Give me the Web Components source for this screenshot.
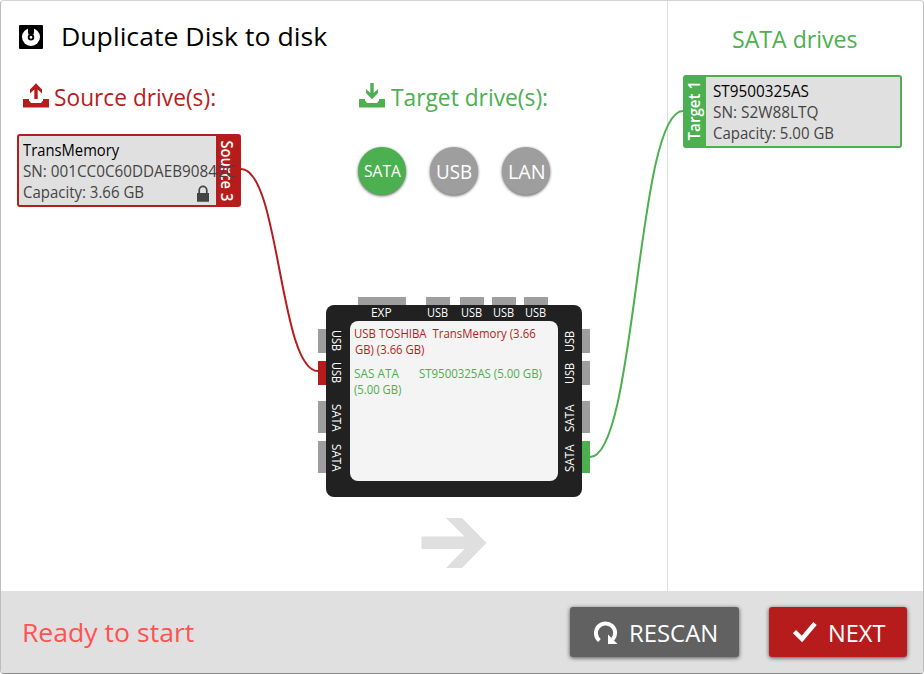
<!DOCTYPE html>
<html lang="en">
<head>
<meta charset="utf-8">
<title>Duplicate Disk to disk</title>
<style>
html,body{margin:0;padding:0;background:#fff;overflow:hidden}
body{font-family:"Open Sans","Noto Sans",sans-serif}
</style>
</head>
<body>
<duplicator-app></duplicator-app>
<script>
const FONT='"Open Sans","Noto Sans",sans-serif';
const ctx=document.createElement('canvas').getContext('2d');
function define(name,html,setup){
  customElements.define(name,class extends HTMLElement{
    connectedCallback(){
      if(this.shadowRoot)return;
      const t=document.createElement('template');
      t.innerHTML=html;
      this.attachShadow({mode:'open'}).append(t.content.cloneNode(true));
      if(setup)setup(this,this.shadowRoot);
    }
  });
}

/* One line of text, condensed or widened so that its ink is "w" pixels wide. */
customElements.define('fit-text',class extends HTMLElement{
  connectedCallback(){
    if(this.shadowRoot)return;
    const s=+this.getAttribute('size'),w=+this.getAttribute('w'),lh=+(this.getAttribute('lh')||Math.round(s*1.36));
    const wt=this.getAttribute('weight')||400;
    const text=this.getAttribute('text');
    ctx.font=`${wt} ${s}px ${FONT}`;
    const m=ctx.measureText(text),k=w/(m.actualBoundingBoxLeft+m.actualBoundingBoxRight);
    this.attachShadow({mode:'open'}).innerHTML=`<style>
      :host{display:block;flex:none;width:${w}px;height:${lh}px}
      span{display:inline-block;vertical-align:top;white-space:pre;font:${wt} ${s}px/${lh}px ${FONT};transform-origin:0 0;
        transform:translateX(${m.actualBoundingBoxLeft*k}px) scaleX(${k})}
    </style><span></span>`;
    this.shadowRoot.querySelector('span').textContent=text;
  }
});

define('section-heading',`<style>
  :host{display:flex;align-items:flex-start;gap:6px;height:34px}
  ::slotted(svg){margin-top:3px;flex:none}
</style><slot name="icon"></slot><slot></slot>`);

define('drive-card',`<style>
  :host{display:flex;box-sizing:border-box;height:73px;background:#e0e0e0;border:2px solid var(--accent);border-radius:3px;position:relative}
  .info{flex:1;min-width:0;padding:3.5px 0 0 3.8px;display:flex;flex-direction:column;color:#444;z-index:1}
  .tab{width:23px;box-sizing:border-box;background:var(--accent);color:#fff;display:flex;align-items:center;justify-content:center;flex:none}
  .tab fit-text{transform:translateX(-1.5px) rotate(90deg)}
  :host([side=left]) .tab{order:-1;width:21px}
  :host([side=left]) .tab fit-text{transform:translateX(-1px) rotate(-90deg)}
  :host([side=left]) .info{padding-left:6.8px}
  .name{color:#000}
  svg{display:none;position:absolute;left:177px;top:48.5px}
  :host([locked]) svg{display:block}
</style><div class="info"></div><div class="tab"></div>
<svg width="14" height="18" viewBox="0 0 14 18"><path d="M3.2 8V5.2a3.8 3.8 0 0 1 7.6 0V8" fill="none" stroke="#444" stroke-width="1.7"/><path d="M1 8h12v8.8H1z" fill="#444"/></svg>`,
(h,r)=>{
  const info=r.querySelector('.info');
  ['name','serial','capacity'].forEach((n,i)=>{
    const [t,w]=h.getAttribute(n).split('|');
    info.insertAdjacentHTML('beforeend',`<fit-text class="${n}" size="15.4" lh="21.3" w="${w}" text="${t}"></fit-text>`);
  });
  const [t,w]=h.getAttribute('tab').split('|');
  r.querySelector('.tab').innerHTML=`<fit-text size="15.4" lh="20" weight="${h.getAttribute('tab-weight')||600}" w="${w}" text="${t}"></fit-text>`;
});

define('round-button',`<style>
  :host{display:grid;place-items:center;box-sizing:border-box;width:48px;height:48px;padding-top:1.5px;border-radius:50%;background:#9e9e9e;color:#fff;box-shadow:0 1px 3px rgba(0,0,0,.65)}
  :host([active]){background:#4caf50}
</style><slot></slot>`);

define('action-button',`<style>
  :host{display:flex;box-sizing:border-box;height:50px;border-radius:3px;color:#fff;padding:8px 0 0 24px;background:var(--bg);box-shadow:0 1px 4px rgba(0,0,0,.65)}
  ::slotted(svg){flex:none;margin-top:5.5px}
</style><slot name="icon"></slot><slot></slot>`);

/* The duplicator unit: a canvas of connectors placed around its display. */
define('device-chip',`<style>
  :host{display:block;position:relative;width:272px;height:200px}
  .body{position:absolute;left:8px;top:8px;width:256px;height:192px;border-radius:8px;background:#212121}
  .screen{position:absolute;left:32px;top:24px;width:208px;height:160px;box-sizing:border-box;border-radius:8px;background:#f4f4f4;padding:4px}
  .port{position:absolute;background:#9e9e9e}
  .label{position:absolute;display:grid;place-items:center;color:#fff;width:32px;height:16px}
  .row{display:flex;gap:19.5px}
  .src{color:#b71c1c;margin-bottom:8px}.dst{color:#4caf50}
  .src fit-text{margin-left:.5px}
</style><div class="body"></div><div id="ports"></div>
<div class="screen"><div class="src">
<fit-text size="11.7" lh="16" w="181" text="USB TOSHIBA  TransMemory (3.66"></fit-text>
<fit-text size="11.7" lh="16" w="69" text="GB) (3.66 GB)"></fit-text></div>
<div class="dst"><div class="row"><fit-text size="11.7" lh="16" w="45.5" text="SAS ATA"></fit-text><fit-text size="11.7" lh="16" w="122.5" text="ST9500325AS (5.00 GB)"></fit-text></div>
<fit-text size="11.7" lh="16" w="47" text="(5.00 GB)"></fit-text></div></div>`,
(h,r)=>{
  const out=[];
  const add=(x,y,w,hh,c,t,tw,cx,cy,rot)=>out.push(`<div class="port" style="left:${x}px;top:${y}px;width:${w}px;height:${hh}px;${c?`background:${c}`:''}"></div><div class="label" style="left:${cx-16}px;top:${cy-8}px;transform:rotate(${rot}deg)"><fit-text size="11.9" weight="500" lh="16" w="${tw}" text="${t}"></fit-text></div>`);
  add(40,0,48,8,'','EXP',19.5,63.5,15,0);
  [[108,120],[142,154],[174,186],[206,218.3]].forEach(([x,c])=>add(x,0,24,8,'','USB',20.5,c,15,0));
  [[32,24,'USB',20.5,43.5],[64,24,'USB',20.5,76],[104,32,'SATA',28,121],[144,32,'SATA',28,161]].forEach(([y,hh,t,tw,cy],i)=>{
    add(0,y,8,hh,i==1?'#b71c1c':'',t,tw,19.2,cy,90);
    add(264,y,8,hh,i==3?'#4caf50':'',t,tw,250.5,cy,-90);
  });
  r.querySelector('#ports').innerHTML=out.join('');
});

define('drive-wires',`<style>:host{display:block;position:absolute;inset:-1px;pointer-events:none}svg{display:block}</style>
<svg width="924" height="674" fill="none" stroke-width="2"><path d="M241 169C279.500 169 279.500 371 318 371" stroke="#b71c1c"/><path d="M590 457C636.500 457 636.500 111 683 111" stroke="#4caf50"/></svg>`);

define('duplicator-app',`<style>
  :host{display:grid;position:relative;box-sizing:border-box;width:924px;height:674px;grid-template:590px 1fr/666px 1fr;background:#fff;
    border:1px solid #bdbdbd;border-top-color:#d4d4d4;border-bottom:1px solid #8c8c8c;border-radius:4px;overflow:hidden}
  main{display:flex;flex-direction:column;position:relative}
  .title{display:flex;gap:20px;padding:17px 0 0 18px;height:37px;color:#000}
  .title svg{margin-top:7px;flex:none}
  .cols{display:grid;grid-template-columns:335px 1fr;padding:25px 0 0 16px;height:136px}
  .source{color:#b71c1c}.target{color:#4caf50}
  .cols section-heading{margin-left:6px}
  .cols .target section-heading{margin-left:7px}
  drive-card{margin-top:20px;width:224px}
  .source drive-card{--accent:#b71c1c}
  .rounds{display:flex;gap:24px;padding:32.5px 0 0 6px}
  device-chip{margin:81px 0 0 317px}
  .arrow{margin:20px 0 0 420px;display:block}
  aside{border-left:1px solid #dedede;display:flex;flex-direction:column;color:#4caf50;padding-top:21px}
  aside>fit-text{margin-left:65px}
  aside drive-card{--accent:#4caf50;width:219px;margin:19px 0 0 15px}
  footer{grid-column:1/3;background:#e0e0e0;display:flex;align-items:flex-start;padding:16px 16px 0 22.5px}
  .status{color:#ff5252;padding-top:7px;flex:1}
  .next{width:138px;margin-left:30px;--bg:#b71c1c}.rescan{width:169px;--bg:#616161}
  .rescan svg{margin-right:13px}.next svg{margin-right:13px}
</style>
<main>
  <div class="title"><svg width="24" height="24" viewBox="0 0 24 24"><rect width="24" height="24" rx="1" fill="#000"/><circle cx="12" cy="12" r="9" fill="#fff"/><path d="M8.500 2H15.500L14.500 9H9.500Z" fill="#000"/><circle cx="12" cy="12" r="4" fill="#fff"/><path d="M9.300 6H14.700V9.500H9.300Z" fill="#000"/><circle cx="12" cy="12.300" r="2.300" fill="#fff" stroke="#000" stroke-width="1.900"/></svg>
  <fit-text size="26" lh="37" w="264.500" text="Duplicate Disk to disk"></fit-text></div>
  <div class="cols">
    <div class="source"><section-heading><svg slot="icon" width="26" height="25" viewBox="0 0 26 25" fill="currentColor"><path d="M0 16H6V17.500L8 20H18L20 17.500V16H26V24.500H0Z"/><path d="M11.300 16V6.500L7 10.500V6.500L13 .3 19 6.500V10.500L14.700 6.500V16Z"/></svg><fit-text size="23.300" lh="34" w="160" text="Source drive(s):"></fit-text></section-heading>
      <drive-card locked name="TransMemory|96.5" serial="SN: 001CC0C60DDAEB90842C|212.5" capacity="Capacity: 3.66 GB|121" tab="Source 3|61"></drive-card></div>
    <div class="target"><section-heading><svg slot="icon" width="26" height="25" viewBox="0 0 26 25" fill="currentColor"><path d="M0 16H6V17.500L8 20H18L20 17.500V16H26V24.500H0Z"/><path d="M11.300 0H14.700V10L19 6V10L13 16.200 7 10V6L11.300 10Z"/></svg><fit-text size="23.300" lh="34" w="156" text="Target drive(s):"></fit-text></section-heading>
      <div class="rounds"><round-button active><fit-text size="15.500" lh="22" w="37" text="SATA"></fit-text></round-button><round-button><fit-text size="19.500" w="34.500" text="USB"></fit-text></round-button><round-button><fit-text size="19.500" w="35" text="LAN"></fit-text></round-button></div></div>
  </div>
  <device-chip></device-chip>
  <svg class="arrow" width="66" height="52" viewBox="0 0 66 52"><path d="M.5 19.500H43.500L25 1H41L65.500 26 41 51H25L43.500 32H.5Z" fill="#dfdfdf"/></svg>
</main>
<aside><fit-text size="23.300" lh="34" w="124.500" text="SATA drives"></fit-text>
  <drive-card side="left" name="ST9500325AS|95.5" serial="SN: S2W88LTQ|105.5" capacity="Capacity: 5.00 GB|121" tab="Target 1|57"></drive-card></aside>
<footer><div class="status"><fit-text size="26" lh="37" w="170" text="Ready to start"></fit-text></div>
  <action-button class="rescan"><svg slot="icon" width="24" height="24" viewBox="0 0 24 24"><path d="M5.500 19.500A9.600 9.600 0 1 1 18.600 18.500" fill="none" stroke="#fff" stroke-width="4"/><path d="M14 13.500V23H23.500Z" fill="#fff"/></svg><fit-text size="23.600" lh="36" w="85.500" text="RESCAN"></fit-text></action-button>
  <action-button class="next"><svg slot="icon" width="24" height="24" viewBox="0 0 24 24"><path d="M1.500 10.500 9 18 22 2.500" fill="none" stroke="#fff" stroke-width="4.500"/></svg><fit-text size="23.600" lh="36" w="55.500" text="NEXT"></fit-text></action-button>
</footer><drive-wires></drive-wires>`);
</script>
</body>
</html>
